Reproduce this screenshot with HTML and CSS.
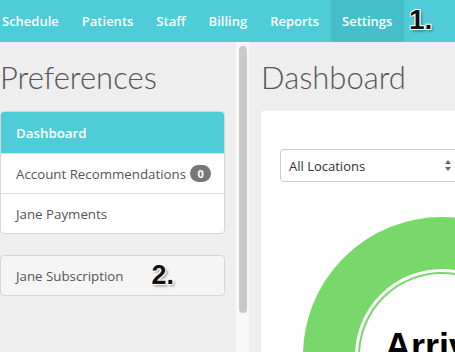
FILE: index.html
```html
<!DOCTYPE html>
<html lang="en">
<head>
    <meta charset="UTF-8">
    <meta name="viewport" content="width=device-width, initial-scale=1.0">
    <title>Settings - Preferences</title>
    <link rel="stylesheet" href="styles.css">
</head>
<body>
    <div class="topnav">
        <a href="#">Schedule</a>
        <a href="#">Patients</a>
        <a href="#">Staff</a>
        <a href="#">Billing</a>
        <a href="#">Reports</a>
        <a href="#" class="active">Settings</a>
        <span class="note note-nav">1.</span>
    </div>
    <div class="layout">
        <aside class="sidebar">
            <h2>Preferences</h2>
            <div class="menu">
                <a href="#" class="menu-item active">Dashboard</a>
                <a href="#" class="menu-item">Account Recommendations <span class="badge">0</span></a>
                <a href="#" class="menu-item">Jane Payments</a>
            </div>
            <div class="menu solo">
                <a href="#" class="menu-item">Jane Subscription <span class="note note-item">2.</span></a>
            </div>
        </aside>
        <div class="track"><div class="thumb"></div></div>
        <main class="content">
            <h2>Dashboard</h2>
            <div class="card">
                <div class="select">
                    <span>All Locations</span>
                    <svg width="6" height="11" viewBox="0 0 6 11"><path d="M3 0 L6 4 L0 4 Z M3 11 L6 7 L0 7 Z" fill="#666"/></svg>
                </div>
                <svg class="chart" width="300" height="300" viewBox="0 0 300 300">
                    <circle cx="150" cy="150" r="113" fill="none" stroke="#78d86a" stroke-width="52"/>
                    <circle cx="150" cy="150" r="83" fill="none" stroke="#78d86a" stroke-width="2"/>
                    <text x="93" y="153" class="chart-label">Arrivals</text>
                </svg>
            </div>
        </main>
    </div>
</body>
</html>
```

FILE: styles.css
```css
* {
    box-sizing: border-box;
}
body {
    margin: 0;
    height: 352px;
    overflow: hidden;
    background: #eeeeee;
    color: #555;
    font-family: 'Open Sans', sans-serif;
}
.topnav {
    display: flex;
    align-items: center;
    height: 42px;
    background: #4ecdd8;
}
.topnav a {
    height: 42px;
    line-height: 42px;
    padding: 0 11.5px;
    color: #fff;
    font-weight: 600;
    font-size: 13px;
    text-decoration: none;
}
.topnav a:first-child {
    margin-left: -9.5px;
}
.topnav a.active {
    background: #47bfcb;
}
.note {
    font-family: 'Liberation Sans', sans-serif;
    font-weight: 700;
    color: #111;
    text-shadow: -1px -1px 0 #fff, 1px -1px 0 #fff, -1px 1px 0 #fff, 1px 1px 0 #fff,
        2px 2px 3px rgba(0, 0, 0, 0.45);
}
.note-nav {
    font-size: 28px;
    margin: 0 0 3px 5px;
}
.note-item {
    font-size: 27px;
    margin-left: 28px;
}
.layout {
    display: flex;
    height: 310px;
}
.sidebar {
    width: 225px;
    flex-shrink: 0;
    padding-top: 17px;
}
h2 {
    margin: 0 0 16px;
    font-family: 'Lato', sans-serif;
    font-weight: 300;
    font-size: 31px;
    line-height: 36px;
    color: #555;
}
.menu {
    background: #fff;
    border: 1px solid #d6d6d6;
    border-radius: 4px;
    overflow: hidden;
}
.menu-item {
    display: flex;
    align-items: center;
    height: 40px;
    padding: 0 12px 0 15px;
    border-top: 1px solid #ddd;
    color: #555;
    font-size: 13.3px;
    white-space: nowrap;
    text-decoration: none;
}
.menu-item:first-child {
    height: 41px;
    border-top: none;
}
.menu-item.active {
    background: #4ecdd8;
    color: #fff;
    font-weight: 600;
}
.badge {
    margin-left: 4px;
    min-width: 21px;
    height: 17px;
    line-height: 17px;
    border-radius: 9px;
    background: #777;
    color: #fff;
    font-size: 11px;
    font-weight: 700;
    text-align: center;
}
.menu.solo {
    margin-top: 21px;
    background: #f5f5f5;
}
.menu.solo .menu-item {
    height: 39px;
}
.track {
    width: 13px;
    flex-shrink: 0;
    margin-left: 11px;
    padding: 4px 2px 0 3px;
    background: #f8f8f8;
}
.thumb {
    height: 267px;
    border-radius: 4px;
    background: #c9c9c9;
}
.content {
    width: 300px;
    flex-shrink: 0;
    margin-left: 12px;
    padding-top: 17px;
}
.card {
    height: 260px;
    padding: 38px 0 0 19px;
    background: #fff;
    border-radius: 4px;
}
.select {
    display: flex;
    align-items: center;
    justify-content: space-between;
    width: 182px;
    height: 33px;
    padding: 0 10px 0 8px;
    border: 1px solid #ccc;
    border-radius: 4px;
    color: #333;
    font-size: 13px;
}
.chart {
    display: block;
    margin: 24px 0 0 12px;
}
.chart-label {
    font-family: 'Liberation Sans', sans-serif;
    font-weight: 700;
    font-size: 36px;
    fill: #000;
}
```
